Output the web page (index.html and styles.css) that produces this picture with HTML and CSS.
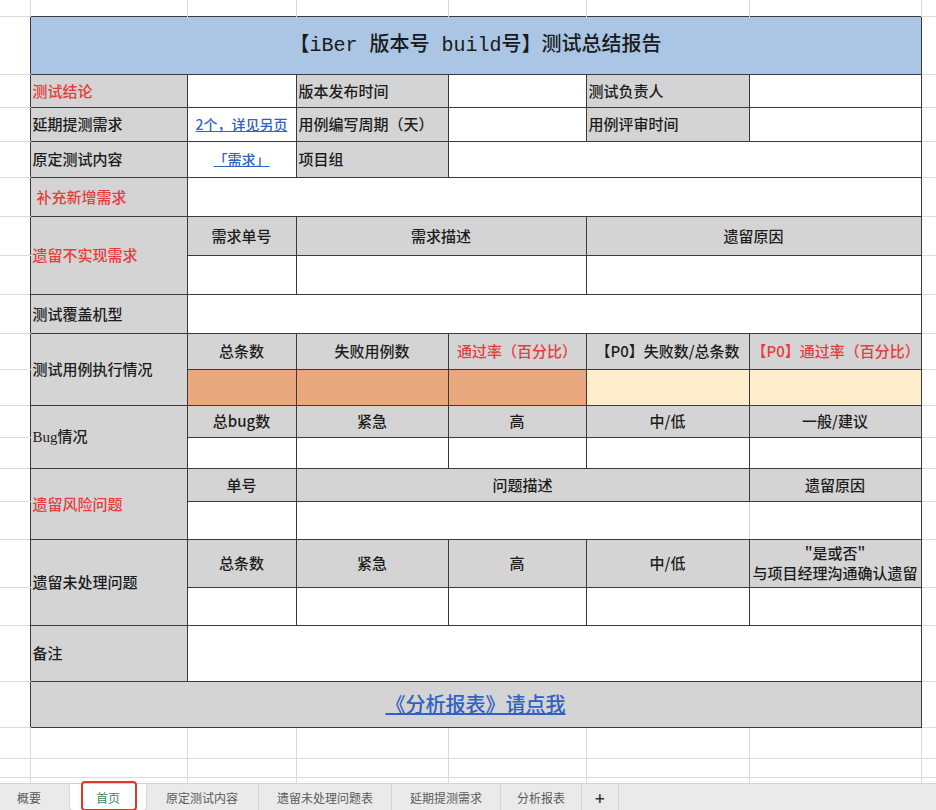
FILE: index.html
```html
<!DOCTYPE html>
<html lang="zh-CN">
<head>
<meta charset="utf-8">
<title>测试总结报告</title>
<link rel="stylesheet" href="styles.css">
</head>
<body>
<table class="sheet">
  <colgroup>
    <col class="w30"><col class="w157"><col class="w109"><col class="w152"><col class="w138"><col class="w163"><col class="w172"><col class="w15">
  </colgroup>
  <tr class="h16">
    <td class="m-tl"></td><td class="m-t"></td><td class="m-t"></td><td class="m-t"></td><td class="m-t"></td><td class="m-t"></td><td class="m-t"></td><td class="m-tr"></td>
  </tr>
  <tr class="h58">
    <td class="m-l"></td>
    <td class="c title" colspan="6">【iBer 版本号 build号】测试总结报告</td>
    <td class="m-r"></td>
  </tr>
  <tr class="h33">
    <td class="m-l"></td>
    <td class="c g red">测试结论</td>
    <td class="c"></td>
    <td class="c g">版本发布时间</td>
    <td class="c"></td>
    <td class="c g">测试负责人</td>
    <td class="c"></td>
    <td class="m-r"></td>
  </tr>
  <tr class="h34">
    <td class="m-l"></td>
    <td class="c g">延期提测需求</td>
    <td class="c ctr"><a class="link" href="#">2个，详见另页</a></td>
    <td class="c g">用例编写周期（天）</td>
    <td class="c"></td>
    <td class="c g">用例评审时间</td>
    <td class="c"></td>
    <td class="m-r"></td>
  </tr>
  <tr class="h36">
    <td class="m-l"></td>
    <td class="c g">原定测试内容</td>
    <td class="c ctr"><a class="link" href="#">「需求」</a></td>
    <td class="c g">项目组</td>
    <td class="c" colspan="3"></td>
    <td class="m-r"></td>
  </tr>
  <tr class="h39">
    <td class="m-l"></td>
    <td class="c g red indent">补充新增需求</td>
    <td class="c" colspan="5"></td>
    <td class="m-r"></td>
  </tr>
  <tr class="h39">
    <td class="m-l"></td>
    <td class="c g red" rowspan="2">遗留不实现需求</td>
    <td class="c g ctr">需求单号</td>
    <td class="c g ctr" colspan="2">需求描述</td>
    <td class="c g ctr" colspan="2">遗留原因</td>
    <td class="m-r"></td>
  </tr>
  <tr class="h39">
    <td class="m-l"></td>
    <td class="c"></td>
    <td class="c" colspan="2"></td>
    <td class="c" colspan="2"></td>
    <td class="m-r"></td>
  </tr>
  <tr class="h39">
    <td class="m-l"></td>
    <td class="c g">测试覆盖机型</td>
    <td class="c" colspan="5"></td>
    <td class="m-r"></td>
  </tr>
  <tr class="h36">
    <td class="m-l"></td>
    <td class="c g" rowspan="2">测试用例执行情况</td>
    <td class="c g ctr">总条数</td>
    <td class="c g ctr">失败用例数</td>
    <td class="c g ctr red">通过率（百分比）</td>
    <td class="c g ctr">【P0】失败数/总条数</td>
    <td class="c g ctr red">【P0】通过率（百分比）</td>
    <td class="m-r"></td>
  </tr>
  <tr class="h36">
    <td class="m-l"></td>
    <td class="c orange"></td>
    <td class="c orange"></td>
    <td class="c orange"></td>
    <td class="c cream"></td>
    <td class="c cream"></td>
    <td class="m-r"></td>
  </tr>
  <tr class="h32">
    <td class="m-l"></td>
    <td class="c g bug" rowspan="2">Bug情况</td>
    <td class="c g ctr">总bug数</td>
    <td class="c g ctr">紧急</td>
    <td class="c g ctr">高</td>
    <td class="c g ctr">中/低</td>
    <td class="c g ctr">一般/建议</td>
    <td class="m-r"></td>
  </tr>
  <tr class="h31">
    <td class="m-l"></td>
    <td class="c"></td><td class="c"></td><td class="c"></td><td class="c"></td><td class="c"></td>
    <td class="m-r"></td>
  </tr>
  <tr class="h33">
    <td class="m-l"></td>
    <td class="c g red" rowspan="2">遗留风险问题</td>
    <td class="c g ctr">单号</td>
    <td class="c g ctr" colspan="3">问题描述</td>
    <td class="c g ctr">遗留原因</td>
    <td class="m-r"></td>
  </tr>
  <tr class="h38">
    <td class="m-l"></td>
    <td class="c"></td>
    <td class="c soft-r" colspan="3"></td>
    <td class="c soft-l"></td>
    <td class="m-r"></td>
  </tr>
  <tr class="h48">
    <td class="m-l"></td>
    <td class="c g" rowspan="2">遗留未处理问题</td>
    <td class="c g ctr">总条数</td>
    <td class="c g ctr">紧急</td>
    <td class="c g ctr">高</td>
    <td class="c g ctr">中/低</td>
    <td class="c g ctr">&quot;是或否&quot;<br>与项目经理沟通确认遗留</td>
    <td class="m-r"></td>
  </tr>
  <tr class="h38">
    <td class="m-l"></td>
    <td class="c"></td><td class="c"></td><td class="c"></td><td class="c"></td><td class="c"></td>
    <td class="m-r"></td>
  </tr>
  <tr class="h56">
    <td class="m-l"></td>
    <td class="c g">备注</td>
    <td class="c" colspan="5"></td>
    <td class="m-r"></td>
  </tr>
  <tr class="h46">
    <td class="m-l"></td>
    <td class="c g ctr" colspan="6"><a class="link big" href="#">《分析报表》请点我</a></td>
    <td class="m-r"></td>
  </tr>
  <tr class="h31">
    <td class="gc"></td><td class="gc"></td><td class="gc"></td><td class="gc"></td><td class="gc"></td><td class="gc"></td><td class="gc"></td><td class="gc"></td>
  </tr>
  <tr class="h19">
    <td class="gc"></td><td class="gc"></td><td class="gc"></td><td class="gc"></td><td class="gc"></td><td class="gc"></td><td class="gc"></td><td class="gc"></td>
  </tr>
  <tr class="h6">
    <td class="gv"></td><td class="gv"></td><td class="gv"></td><td class="gv"></td><td class="gv"></td><td class="gv"></td><td class="gv"></td><td class="gv"></td>
  </tr>
</table>
<div class="tabs">
  <div class="tab first">概要</div>
  <div class="tab active">首页<span class="mark"></span></div>
  <div class="tab p20">原定测试内容</div>
  <div class="tab">遗留未处理问题表</div>
  <div class="tab">延期提测需求</div>
  <div class="tab p16">分析报表</div>
  <div class="tab plus">+</div>
</div>
</body>
</html>
```
FILE: styles.css
```css
html, body {
  margin: 0;
  padding: 0;
  background: #ffffff;
}
body {
  width: 936px;
  height: 810px;
  overflow: hidden;
  font-family: "Noto Sans CJK SC", "Noto Sans", sans-serif;
  color: #1c1c1c;
}
.sheet {
  border-collapse: collapse;
  table-layout: fixed;
  width: 936px;
}
.w30 { width: 30px; }
.w157 { width: 157px; }
.w109 { width: 109px; }
.w152 { width: 152px; }
.w138 { width: 138px; }
.w163 { width: 163px; }
.w172 { width: 172px; }
.w15 { width: 15px; }

.h6 { height: 6px; }
.h16 { height: 16px; }
.h19 { height: 19px; }
.h31 { height: 31px; }
.h32 { height: 32px; }
.h33 { height: 33px; }
.h34 { height: 34px; }
.h36 { height: 36px; }
.h38 { height: 38px; }
.h39 { height: 39px; }
.h46 { height: 46px; }
.h48 { height: 48px; }
.h56 { height: 56px; }
.h58 { height: 58px; }

.sheet td {
  padding: 0 2px;
  font-size: 15px;
  font-weight: 500;
  line-height: 20px;
  vertical-align: middle;
  white-space: nowrap;
  overflow: hidden;
}
/* spreadsheet gridlines outside the report */
.m-tl { border-right: 1px solid #dadada; border-bottom: 1px solid #dadada; }
.m-t { border-right: 1px solid #dadada; }
.m-tr { border-bottom: 1px solid #dadada; }
.m-l { border-bottom: 1px solid #dadada; }
.m-r { border-bottom: 1px solid #dadada; }
.gc { border-right: 1px solid #dadada; border-bottom: 1px solid #dadada; }
.gv { border-right: 1px solid #dadada; }

/* report cells */
.sheet td.c { border: 1px solid #3a3a3a; }
.sheet td.soft-r { border-right: 1px solid #d6d6d6; }
.sheet td.soft-l { border-left: 1px solid #d6d6d6; }
.g { background: #d4d4d4; }
.orange { background: #e9a87d; }
.cream { background: #fdedca; }
.red { color: #e63c3b; }
.ctr { text-align: center; }
.sheet td.indent { padding-left: 6px; }
.bug { font-family: "Liberation Serif", "Noto Sans CJK SC", serif; }

.sheet td.title {
  background: #abc6e4;
  text-align: center;
  font-family: "Liberation Mono", "Noto Sans CJK SC", monospace;
  font-size: 20px;
  line-height: 26px;
  color: #1a1a1a;
  padding-top: 2px;
}

.link {
  color: #2f62c4;
  text-decoration: underline;
  font-size: 14px;
}
.link.big {
  font-size: 20px;
  line-height: 26px;
}

/* sheet tabs */
.tabs {
  display: flex;
  height: 26px;
  background: #eaeaea;
  border-top: 1px solid #d4d4d4;
  font-size: 12px;
  color: #5a5a5a;
}
.tab {
  display: flex;
  align-items: center;
  padding: 0 18px;
  border-right: 1px solid #d6d6d6;
  white-space: nowrap;
}
.tab.first {
  padding: 0 29px 0 17px;
  border-right: none;
}
.tab.active {
  position: relative;
  background: #ffffff;
  color: #3b8a55;
  padding: 0 26px;
  border-right: none;
  box-shadow: 0 1px 2px rgba(0, 0, 0, 0.25);
  border-radius: 0 0 3px 3px;
}
.tab.p20 { padding: 0 20px; }
.tab.p16 { padding: 0 16px; }
.tab.plus {
  padding: 0 13px;
  font-size: 17px;
  font-weight: 500;
  color: #333333;
}
.mark {
  position: absolute;
  left: 11px;
  top: -3px;
  width: 52px;
  height: 26px;
  border: 2px solid #e0362c;
  border-radius: 4px;
}
```
